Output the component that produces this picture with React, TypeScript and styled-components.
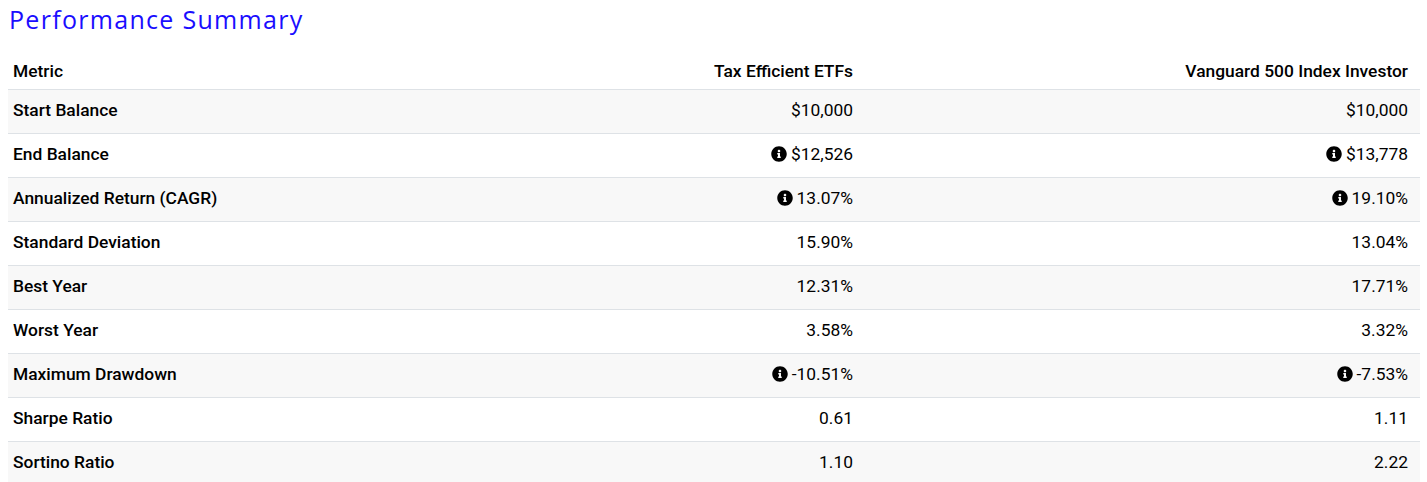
import styled, { createGlobalStyle } from "styled-components";
import { FaInfoCircle } from "react-icons/fa";

const GlobalStyle = createGlobalStyle`
    body {
        margin: 0;
        background: #ffffff;
        font-family: Roboto, "Liberation Sans", sans-serif;
        color: #000000;
    }
`

const Page = styled.div`
    padding: 4px 7px 0 8px;
`

const Title = styled.h2`
    margin: 0 0 19px 1px;
    font-family: "Open Sans", "DejaVu Sans", sans-serif;
    font-weight: 400;
    font-size: 25px;
    line-height: 30px;
    letter-spacing: 1.3px;
    color: #1a0dff;
`

const Table = styled.table`
    width: 100%;
    border-collapse: collapse;
    table-layout: fixed;
    font-size: 17.4px;
`

const HeadCell = styled.th<{ $right?: boolean; $width: string }>`
    box-sizing: border-box;
    width: ${p => p.$width};
    text-align: ${p => (p.$right ? "right" : "left")};
    font-weight: 500;
    padding: 8px 12px 8px 5px;
    line-height: 20px;
`

const Row = styled.tr<{ $shaded: boolean }>`
    background: ${p => (p.$shaded ? "#f8f8f8" : "#ffffff")};
    border-top: 1px solid #dee2e6;
`

const Cell = styled.td<{ $right?: boolean }>`
    text-align: ${p => (p.$right ? "right" : "left")};
    font-weight: ${p => (p.$right ? 400 : 500)};
    padding: 10px 12px 13px 5px;
    line-height: 20px;
    white-space: nowrap;
`

const Info = styled(FaInfoCircle)`
    font-size: 16px;
    vertical-align: -2px;
    margin-right: 4px;
`

const rows = [
    { name: "Start Balance", a: "$10,000", b: "$10,000", info: false },
    { name: "End Balance", a: "$12,526", b: "$13,778", info: true },
    { name: "Annualized Return (CAGR)", a: "13.07%", b: "19.10%", info: true },
    { name: "Standard Deviation", a: "15.90%", b: "13.04%", info: false },
    { name: "Best Year", a: "12.31%", b: "17.71%", info: false },
    { name: "Worst Year", a: "3.58%", b: "3.32%", info: false },
    { name: "Maximum Drawdown", a: "-10.51%", b: "-7.53%", info: true },
    { name: "Sharpe Ratio", a: "0.61", b: "1.11", info: false },
    { name: "Sortino Ratio", a: "1.10", b: "2.22", info: false },
];

const App = () => {
    return (
        <Page>
            <GlobalStyle />
            <Title>Performance Summary</Title>
            <Table>
                <thead>
                    <tr>
                        <HeadCell $width="300px">Metric</HeadCell>
                        <HeadCell $right $width="557px">Tax Efficient ETFs</HeadCell>
                        <HeadCell $right $width="555px">Vanguard 500 Index Investor</HeadCell>
                    </tr>
                </thead>
                <tbody>
                    {rows.map((r, i) => (
                        <Row key={r.name} $shaded={i % 2 === 0}>
                            <Cell>{r.name}</Cell>
                            <Cell $right>{r.info && <Info />}{r.a}</Cell>
                            <Cell $right>{r.info && <Info />}{r.b}</Cell>
                        </Row>
                    ))}
                </tbody>
            </Table>
        </Page>
    )
}

export default App;
